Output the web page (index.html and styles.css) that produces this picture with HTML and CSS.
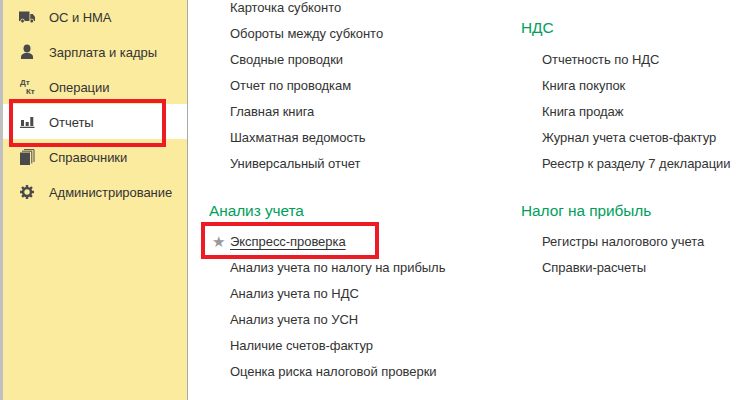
FILE: index.html
```html
<!DOCTYPE html>
<html lang="ru">
<head>
<meta charset="utf-8">
<title>Отчеты</title>
<link rel="stylesheet" href="styles.css">
</head>
<body>
<div class="app">
  <nav class="side">
    <div class="nav-item">
      <svg class="ico" viewBox="0 0 16 16"><path d="M0 2.500h10.500v9.500H0zM11.300 5h2.500L16 8v4h-4.700z" fill="#4a4a4a"/><circle cx="3.500" cy="12" r="1.900" fill="#4a4a4a" stroke="#fbeb9f" stroke-width=".8"/><circle cx="12.800" cy="12" r="1.900" fill="#4a4a4a" stroke="#fbeb9f" stroke-width=".8"/></svg>
      <span class="nav-label">ОС и НМА</span>
    </div>
    <div class="nav-item">
      <svg class="ico" viewBox="0 0 16 16"><ellipse cx="8" cy="4.500" rx="3.500" ry="4" fill="#4a4a4a"/><path d="M2 15v-2.500c0-2 2.500-3 4-3.500h4c1.500.5 4 1.500 4 3.500V15z" fill="#4a4a4a"/></svg>
      <span class="nav-label">Зарплата и кадры</span>
    </div>
    <div class="nav-item">
      <span class="dtkt"><b class="dt">Дт</b><b class="kt">Кт</b></span>
      <span class="nav-label">Операции</span>
    </div>
    <div class="nav-item active">
      <svg class="ico" viewBox="0 0 16 16"><path d="M2 6h3v6H2zM6.700 8h3v4h-3zM11.300 3h3v9h-3zM1 12.800h14.500V14H1z" fill="#4a4a4a"/></svg>
      <span class="nav-label">Отчеты</span>
    </div>
    <div class="nav-item">
      <svg class="ico" viewBox="0 0 16 16"><path d="M1 3.500h10V16H1z" fill="#4a4a4a"/><path d="M3 2.200h9.800V14.500M5 .6h10V13" fill="none" stroke="#4a4a4a" stroke-width="1"/></svg>
      <span class="nav-label">Справочники</span>
    </div>
    <div class="nav-item">
      <svg class="ico" viewBox="0 0 16 16"><circle cx="8" cy="8" r="4" fill="none" stroke="#4a4a4a" stroke-width="2.500"/><path d="M8 1v14M1 8h14M3 3l10 10M13 3L3 13" stroke="#4a4a4a" stroke-width="2.400" stroke-dasharray="2.600 8.800 2.600"/></svg>
      <span class="nav-label">Администрирование</span>
    </div>
  </nav>
  <main class="content">
    <section class="col">
      <ul class="list">
        <li>Карточка субконто</li>
        <li>Обороты между субконто</li>
        <li>Сводные проводки</li>
        <li>Отчет по проводкам</li>
        <li>Главная книга</li>
        <li>Шахматная ведомость</li>
        <li>Универсальный отчет</li>
      </ul>
      <h2 class="heading">Анализ учета</h2>
      <ul class="list">
        <li class="starred"><span class="star">★</span><u>Экспресс-проверка</u></li>
        <li>Анализ учета по налогу на прибыль</li>
        <li>Анализ учета по НДС</li>
        <li>Анализ учета по УСН</li>
        <li>Наличие счетов-фактур</li>
        <li>Оценка риска налоговой проверки</li>
      </ul>
    </section>
    <section class="col">
      <h2 class="heading first">НДС</h2>
      <ul class="list">
        <li>Отчетность по НДС</li>
        <li>Книга покупок</li>
        <li>Книга продаж</li>
        <li>Журнал учета счетов-фактур</li>
        <li>Реестр к разделу 7 декларации</li>
      </ul>
      <h2 class="heading">Налог на прибыль</h2>
      <ul class="list">
        <li>Регистры налогового учета</li>
        <li>Справки-расчеты</li>
      </ul>
    </section>
  </main>
  <div class="mark mark-nav"></div>
  <div class="mark mark-link"></div>
</div>
</body>
</html>
```
FILE: styles.css
```css
* { box-sizing: border-box; }
html, body { margin: 0; padding: 0; }
body {
  width: 744px;
  height: 400px;
  overflow: hidden;
  background: #fff;
  font-family: "Liberation Sans", Arial, sans-serif;
  font-size: 13px;
  letter-spacing: -0.05px;
  color: #333;
}
.app {
  position: relative;
  display: flex;
  width: 744px;
  height: 400px;
  overflow: hidden;
}
.side {
  flex: none;
  width: 188px;
  height: 400px;
  background: #fbeb9f;
  border-left: 3px solid #c0c0c0;
  border-right: 1px solid #a8a8a8;
}
.nav-item {
  display: flex;
  align-items: center;
  gap: 14px;
  height: 35px;
  padding-left: 16px;
}
.nav-item:first-child { margin-top: -1px; }
.nav-item.active { background: #fff; }
.nav-label { padding-top: 2px; }
.ico {
  flex: none;
  width: 16px;
  height: 16px;
}
.dtkt {
  flex: none;
  width: 16px;
  height: 16px;
  position: relative;
  font-size: 8px;
  line-height: 8px;
  color: #4a4a4a;
}
.dt { position: absolute; left: 1px; top: 0; }
.kt { position: absolute; left: 7px; top: 9px; }
.content {
  flex: 1;
  display: flex;
  padding-left: 21px;
}
.col { width: 312px; margin-top: -5px; }
.list {
  list-style: none;
  margin: 0;
  padding: 0 0 0 21px;
}
.list li {
  height: 26px;
  line-height: 26px;
  white-space: nowrap;
  position: relative;
}
.heading {
  margin: 21px 0 5px;
  font-size: 15.4px;
  font-weight: 400;
  height: 26px;
  line-height: 26px;
  color: #00a05a;
}
.heading.first { margin: 20px 0 6px; }
.star {
  position: absolute;
  left: -18px;
  top: 0;
  font-size: 15px;
  color: #9a9a9a;
  font-family: "DejaVu Sans", sans-serif;
}
.starred u { text-underline-offset: 3px; }
.mark {
  position: absolute;
  border: 4px solid #ed1c24;
  pointer-events: none;
}
.mark-nav { left: 9px; top: 99px; width: 157px; height: 48px; }
.mark-link { left: 201px; top: 222px; width: 178px; height: 37px; }
```
